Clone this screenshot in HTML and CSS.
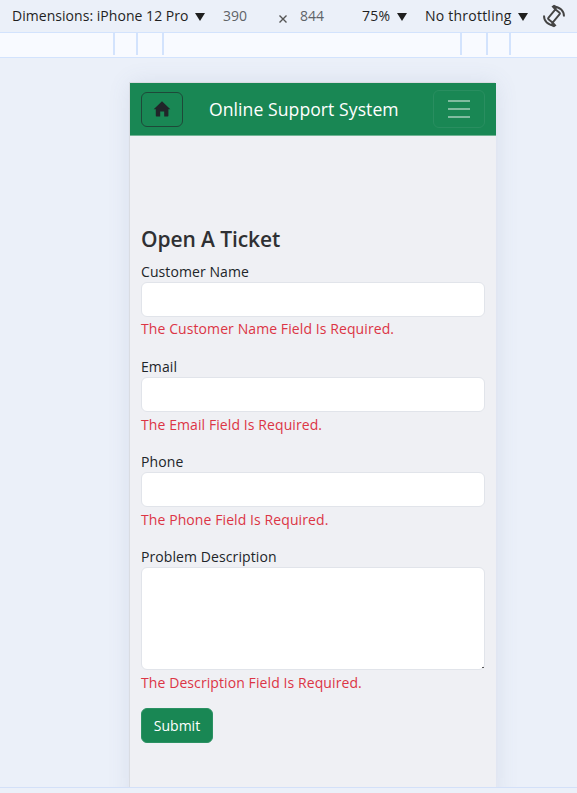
FILE: index.html
```html
<!DOCTYPE html>
<html lang="en">
<head>
<meta charset="utf-8">
<title>Online Support System</title>
<link rel="stylesheet" href="styles.css">
</head>
<body>
<div class="toolbar">
  <span class="device-name">Dimensions: iPhone 12 Pro</span>
  <i class="caret"></i>
  <span class="dim dim-width">390</span>
  <svg class="times" width="8" height="8" viewBox="0 0 8 8"><path d="M.5.5l7 7M7.5.5l-7 7"/></svg>
  <span class="dim dim-height">844</span>
  <span class="zoom">75%</span>
  <i class="caret"></i>
  <span class="throttle">No throttling</span>
  <i class="caret"></i>
  <svg class="rotate" width="24" height="24" viewBox="0 0 24 24">
    <rect x="8.800" y="6" width="6.400" height="12" rx="1" transform="rotate(40 12 12)"/>
    <path d="M2 11.500C1.800 17 6 21.300 12.500 21.300M22 12.500C22.200 7 18 2.700 11.500 2.700"/>
    <path class="head" d="M10.500 17L14.500 21.500L12 23.200L8.500 21.500ZM13.500 7L9.500 2.500L12 .8L15.500 2.500Z"/>
  </svg>
</div>
<div class="ruler">
  <i class="tick"></i><i class="tick"></i><i class="tick"></i><i class="tick"></i><i class="tick"></i><i class="tick"></i>
</div>
<main class="stage">
  <div class="device">
    <nav class="navbar">
      <a class="home"><svg width="18" height="16" viewBox="0 0 18 16"><path d="M9 .3L17.300 8.200H15.400V14.700Q15.400 15.400 14.700 15.400H11.200V10.400H7.200V15.400H3.500Q2.800 15.400 2.800 14.700V8.200H.7Z"/></svg></a>
      <span class="brand">Online Support System</span>
      <a class="toggler"><i></i><i></i><i></i></a>
    </nav>
    <form class="ticket">
      <h1>Open A Ticket</h1>
      <div class="group"><label>Customer Name</label><input type="text"><p class="error">The Customer Name Field Is Required.</p></div>
      <div class="group"><label>Email</label><input type="text"><p class="error">The Email Field Is Required.</p></div>
      <div class="group"><label>Phone</label><input type="text"><p class="error">The Phone Field Is Required.</p></div>
      <div class="group last"><label>Problem Description</label><div class="area"><textarea></textarea><i class="grip"></i></div><p class="error">The Description Field Is Required.</p></div>
      <button type="button">Submit</button>
    </form>
  </div>
</main>
</body>
</html>
```
FILE: styles.css
```css
* { box-sizing: border-box; }
body {
  margin: 0;
  height: 793px;
  overflow: hidden;
  background: #ebf0f9;
  color: #212529;
  font: 14px/22px "Open Sans", "Noto Sans", sans-serif;
  white-space: nowrap;
}
.toolbar {
  display: flex;
  align-items: center;
  height: 33px;
  padding-left: 12px;
  border-bottom: 1px solid #d3e3fd;
  color: #1f1f1f;
}
.toolbar > * { flex: none; }
.device-name { width: 183px; letter-spacing: .04px; }
.caret {
  width: 10px;
  height: 8px;
  margin-top: 2px;
  background: #1f1f1f;
  clip-path: polygon(0 0, 100% 0, 50% 100%);
}
.dim { color: #5f6368; }
.dim-width { width: 56px; margin-left: 18px; }
.times { margin-top: 5px; fill: none; stroke: #555; stroke-width: 1.4; }
.dim-height { width: 62px; margin-left: 13px; }
.zoom { width: 35px; letter-spacing: .2px; }
.throttle { width: 93px; margin-left: 18px; letter-spacing: .23px; }
.rotate { margin-left: 14px; fill: none; stroke: #444; stroke-width: 1.9; }
.rotate .head { fill: #444; stroke: none; }
.ruler {
  display: grid;
  grid-template-columns: 23px 26px 298px 26px 23px 2px;
  height: 25px;
  padding-left: 113px;
  background: #f8faff;
  border-bottom: 1px solid #d3e3fd;
}
.tick { width: 2px; height: 22px; background: #d3e3fd; }
.stage {
  height: 730px;
  padding: 25px 0 0 130px;
  overflow: hidden;
  border-bottom: 1px solid #d3e0f8;
}
.device {
  width: 366px;
  height: 720px;
  background: #eff0f4;
  box-shadow: -1px -1px 0 #d9dce2, 0 0 22px rgba(80, 100, 140, .12);
}
.navbar {
  display: flex;
  align-items: center;
  height: 53px;
  padding: 0 11px;
  background: #198754;
  border-bottom: 1px solid #70b394;
}
.home {
  display: flex;
  align-items: center;
  justify-content: center;
  width: 42px;
  height: 35px;
  border: 1px solid #1e4939;
  border-radius: 6px;
}
.home svg { fill: #212529; }
.brand { width: 224px; margin-left: 26px; color: #fff; font-size: 17.6px; letter-spacing: .06px; }
.toggler {
  display: flex;
  flex-direction: column;
  align-items: center;
  justify-content: center;
  gap: 6px;
  width: 52px;
  height: 38px;
  border: 1px solid #298e60;
  border-radius: 6px;
}
.toggler i { width: 22px; height: 2px; background: #80bca0; }
.ticket { padding: 90px 11px 0; }
h1 { margin: 0 0 8px; font-size: 21px; font-weight: 600; line-height: 27px; letter-spacing: -.1px; color: #2f3033; }
.group { height: 95.1px; }
.last { height: 163px; }
label { display: block; height: 21px; line-height: 22px; letter-spacing: .09px; }
input, textarea {
  display: block;
  width: 344px;
  height: 35px;
  margin: 0;
  border: 1px solid #e1e4ea;
  border-radius: 6px;
  background: #fff;
  outline: 0;
}
textarea { height: 103px; resize: none; }
.area { position: relative; }
.grip { position: absolute; right: 1px; bottom: 2px; width: 2px; height: 1px; background: #555; }
.error { margin: 1.45px 0 0; line-height: 22px; letter-spacing: .09px; color: #dc3545; }
button {
  display: block;
  width: 72px;
  height: 35px;
  margin-top: -1.3px;
  padding: 2px 0 0;
  border: 1px solid #2b9163;
  border-radius: 6px;
  background: #198754;
  color: #fff;
  font: inherit;
}
```
